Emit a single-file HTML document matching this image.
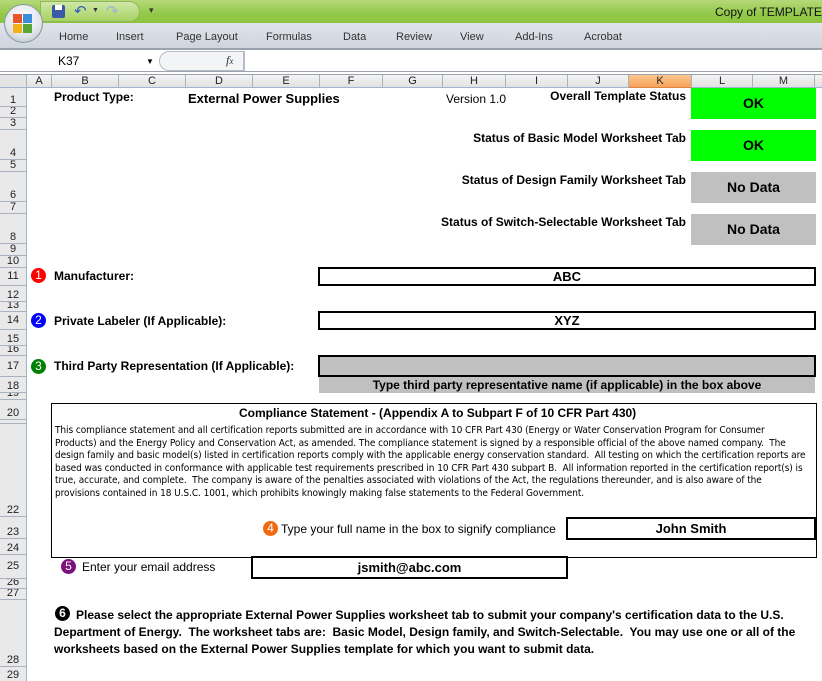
<!DOCTYPE html>
<html><head><meta charset="utf-8">
<style>
*{margin:0;padding:0;box-sizing:border-box}
body{width:822px;height:681px;overflow:hidden;background:#fff;font-family:"Liberation Sans",Arial,sans-serif;position:relative}
.a{position:absolute;white-space:nowrap}
.b{font-weight:bold;font-size:12px;color:#000}
.r{position:absolute;right:136px;white-space:nowrap;text-align:right}
.ch{position:absolute;top:75px;height:13px;background:linear-gradient(#f4f4f4,#e2e2e2);border-right:1px solid #a9b3bf;border-bottom:1px solid #9eb6ce;font-size:11px;text-align:center;line-height:13px;color:#222}
.rh{position:absolute;left:0;width:27px;background:#e9e9e9;border-bottom:1px solid #a9b3bf;border-right:1px solid #9eb6ce;font-size:11px;text-align:center;color:#222;display:flex;align-items:flex-end;justify-content:center;line-height:11px;overflow:hidden}
.box{position:absolute;border:2px solid #000;font-weight:bold;font-size:13px;text-align:center}
.st{position:absolute;left:691px;width:125px;height:31px;font-weight:bold;font-size:14px;text-align:center;line-height:31px}
.num{position:absolute;width:15px;height:15px;border-radius:50%;color:#fff;font-size:12px;text-align:center;line-height:15px;font-weight:normal}
.p{font-size:10px;color:#000;line-height:12.6px;font-family:"DejaVu Sans Condensed","Liberation Sans",sans-serif;letter-spacing:-0.08px}
</style></head><body>
<div class="a" style="left:0;top:0;width:822px;height:23px;background:linear-gradient(#b5d97a,#92c94a 60%,#8cc440)"></div>
<div class="a" style="left:40px;top:1px;width:100px;height:21px;border:1px solid #8fb85a;border-radius:0 12px 12px 0;background:linear-gradient(#cfe8a8,#a6d260)"></div>
<div class="a" style="left:52px;top:5px;width:13px;height:13px;background:#3a5aa8;border-radius:2px"></div>
<div class="a" style="left:55px;top:5px;width:7px;height:5px;background:#fff"></div>
<div class="a" style="left:74px;top:2px;font-size:15px;color:#2e5cb8">↶</div>
<div class="a" style="left:92px;top:7px;font-size:7px;color:#333">▼</div>
<div class="a" style="left:106px;top:2px;font-size:15px;color:#9fb4cc">↷</div>
<div class="a" style="left:149px;top:5px;font-size:9px;color:#333">▾</div>
<div class="a" style="left:715px;top:5px;font-size:12px;color:#111">Copy of TEMPLATE_</div>
<div class="a" style="left:0;top:23px;width:822px;height:27px;background:linear-gradient(#dfe3ea,#cfd5de);border-bottom:2px solid #9aa3ad"></div>
<div class="a" style="left:4px;top:4px;width:39px;height:39px;border-radius:50%;background:radial-gradient(circle at 50% 35%,#fff,#dfe4ea 60%,#a9b2bc);border:1px solid #8d969f"></div>
<div class="a" style="left:13px;top:14px;width:9px;height:9px;background:#e8542a"></div>
<div class="a" style="left:23px;top:14px;width:9px;height:9px;background:#3c8dd8"></div>
<div class="a" style="left:13px;top:24px;width:9px;height:9px;background:#f2b21c"></div>
<div class="a" style="left:23px;top:24px;width:9px;height:9px;background:#5aa536"></div>
<div class="a" style="top:31px;left:59px;font-size:11px;color:#333">Home</div>
<div class="a" style="top:31px;left:116px;font-size:11px;color:#333">Insert</div>
<div class="a" style="top:31px;left:176px;font-size:11px;color:#333">Page Layout</div>
<div class="a" style="top:31px;left:266px;font-size:11px;color:#333">Formulas</div>
<div class="a" style="top:31px;left:343px;font-size:11px;color:#333">Data</div>
<div class="a" style="top:31px;left:396px;font-size:11px;color:#333">Review</div>
<div class="a" style="top:31px;left:460px;font-size:11px;color:#333">View</div>
<div class="a" style="top:31px;left:515px;font-size:11px;color:#333">Add-Ins</div>
<div class="a" style="top:31px;left:584px;font-size:11px;color:#333">Acrobat</div>
<div class="a" style="left:0;top:50px;width:822px;height:22px;background:#fff;border-bottom:1px solid #9aa3ad"></div>
<div class="a" style="left:58px;top:54px;font-size:12px;color:#000">K37</div>
<div class="a" style="left:146px;top:57px;font-size:8px">▼</div>
<div class="a" style="left:159px;top:51px;width:85px;height:20px;border:1px solid #b5bcc5;border-radius:10px 0 0 10px;background:#f3f4f6"></div>
<div class="a" style="left:226px;top:53px;font-size:12px;font-style:italic;font-family:'Liberation Serif',serif;color:#333">f<span style="font-size:9px">x</span></div>
<div class="a" style="left:244px;top:51px;width:1px;height:20px;background:#b5bcc5"></div>
<div class="a" style="left:0;top:72px;width:822px;height:3px;background:#fff;border-bottom:1px solid #9aa3ad"></div>
<div class="ch" style="left:0;width:27px;background:#e4e4e4"></div>
<div class="ch" style="left:27px;width:25px">A</div>
<div class="ch" style="left:52px;width:67px">B</div>
<div class="ch" style="left:119px;width:67px">C</div>
<div class="ch" style="left:186px;width:67px">D</div>
<div class="ch" style="left:253px;width:67px">E</div>
<div class="ch" style="left:320px;width:63px">F</div>
<div class="ch" style="left:383px;width:60px">G</div>
<div class="ch" style="left:443px;width:63px">H</div>
<div class="ch" style="left:506px;width:62px">I</div>
<div class="ch" style="left:568px;width:61px">J</div>
<div class="ch" style="left:629px;width:63px;background:linear-gradient(#fbc68e,#f6a45c);border-bottom-color:#e3823e">K</div>
<div class="ch" style="left:692px;width:61px">L</div>
<div class="ch" style="left:753px;width:62px">M</div>
<div class="ch" style="left:815px;width:10px"></div>
<div class="rh" style="top:88px;height:19px">1</div>
<div class="rh" style="top:107px;height:11px">2</div>
<div class="rh" style="top:118px;height:12px">3</div>
<div class="rh" style="top:130px;height:30px">4</div>
<div class="rh" style="top:160px;height:12px">5</div>
<div class="rh" style="top:172px;height:30px">6</div>
<div class="rh" style="top:202px;height:12px">7</div>
<div class="rh" style="top:214px;height:30px">8</div>
<div class="rh" style="top:244px;height:12px">9</div>
<div class="rh" style="top:256px;height:12px">10</div>
<div class="rh" style="top:268px;height:18px;align-items:center">11</div>
<div class="rh" style="top:286px;height:16px">12</div>
<div class="rh" style="top:302px;height:10px">13</div>
<div class="rh" style="top:312px;height:18px;align-items:center">14</div>
<div class="rh" style="top:330px;height:16px">15</div>
<div class="rh" style="top:346px;height:10px">16</div>
<div class="rh" style="top:356px;height:21px;align-items:center">17</div>
<div class="rh" style="top:377px;height:16px">18</div>
<div class="rh" style="top:393px;height:7px">19</div>
<div class="rh" style="top:400px;height:20px">20</div>
<div class="rh" style="top:420px;height:4px"></div>
<div class="rh" style="top:424px;height:93px">22</div>
<div class="rh" style="top:517px;height:22px">23</div>
<div class="rh" style="top:539px;height:16px">24</div>
<div class="rh" style="top:555px;height:24px;align-items:center">25</div>
<div class="rh" style="top:579px;height:10px">26</div>
<div class="rh" style="top:589px;height:11px">27</div>
<div class="rh" style="top:600px;height:67px">28</div>
<div class="rh" style="top:667px;height:14px;border-bottom:none">29</div>

<div class="a b" style="left:54px;top:90px">Product Type:</div>
<div class="a b" style="left:188px;top:91px;font-size:13px">External Power Supplies</div>
<div class="a" style="left:446px;top:92px;font-size:12px">Version 1.0</div>
<div class="r b" style="top:89px">Overall Template Status</div>
<div class="st" style="top:88px;background:#00ff00">OK</div>
<div class="r b" style="top:131px">Status of Basic Model Worksheet Tab</div>
<div class="st" style="top:130px;background:#00ff00">OK</div>
<div class="r b" style="top:173px">Status of Design Family Worksheet Tab</div>
<div class="st" style="top:172px;background:#c0c0c0">No Data</div>
<div class="r b" style="top:215px">Status of Switch-Selectable Worksheet Tab</div>
<div class="st" style="top:214px;background:#c0c0c0">No Data</div>

<div class="num" style="left:31px;top:268px;background:#f00">1</div>
<div class="a b" style="left:54px;top:269px">Manufacturer:</div>
<div class="box" style="left:318px;top:267px;width:498px;height:19px;line-height:15px">ABC</div>
<div class="num" style="left:31px;top:313px;background:#00f">2</div>
<div class="a b" style="left:54px;top:314px">Private Labeler (If Applicable):</div>
<div class="box" style="left:318px;top:311px;width:498px;height:19px;line-height:15px">XYZ</div>
<div class="num" style="left:31px;top:359px;background:#008000">3</div>
<div class="a b" style="left:54px;top:359px">Third Party Representation (If Applicable):</div>
<div class="box" style="left:318px;top:355px;width:498px;height:22px;background:#c0c0c0"></div>
<div class="a b" style="left:319px;top:377px;width:496px;height:16px;background:#c0c0c0;text-align:center;line-height:16px">Type third party representative name (if applicable) in the box above</div>

<div class="a" style="left:51px;top:403px;width:766px;height:155px;border:1px solid #000"></div>
<div class="a b" style="left:239px;top:406px">Compliance Statement - (Appendix A to Subpart F of 10 CFR Part 430)</div>
<div class="a p" style="left:55px;top:425px">This compliance statement and all certification reports submitted are in accordance with 10 CFR Part 430 (Energy or Water Conservation Program for Consumer<br>Products) and the Energy Policy and Conservation Act, as amended. The compliance statement is signed by a responsible official of the above named company.&nbsp; The<br>design family and basic model(s) listed in certification reports comply with the applicable energy conservation standard.&nbsp; All testing on which the certification reports are<br>based was conducted in conformance with applicable test requirements prescribed in 10 CFR Part 430 subpart B.&nbsp; All information reported in the certification report(s) is<br>true, accurate, and complete.&nbsp; The company is aware of the penalties associated with violations of the Act, the regulations thereunder, and is also aware of the<br>provisions contained in 18 U.S.C. 1001, which prohibits knowingly making false statements to the Federal Government.</div>
<div class="num" style="left:263px;top:521px;background:#f26a10">4</div>
<div class="a" style="left:281px;top:522px;font-size:12px">Type your full name in the box to signify compliance</div>
<div class="box" style="left:566px;top:517px;width:250px;height:23px;line-height:19px">John Smith</div>
<div class="num" style="left:61px;top:559px;background:#7b0f7b">5</div>
<div class="a" style="left:82px;top:560px;font-size:12px">Enter your email address</div>
<div class="box" style="left:251px;top:556px;width:317px;height:23px;line-height:19px">jsmith@abc.com</div>

<div class="num" style="left:55px;top:606px;background:#000;font-weight:bold">6</div>
<div class="a b" style="left:54px;top:607px;line-height:17px;white-space:normal;width:755px;text-indent:22px">Please select the appropriate External Power Supplies worksheet tab to submit your company's certification data to the U.S. Department of Energy.&nbsp; The worksheet tabs are:&nbsp; Basic Model, Design family, and Switch-Selectable.&nbsp; You may use one or all of the worksheets based on the External Power Supplies template for which you want to submit data.</div>
</body></html>
